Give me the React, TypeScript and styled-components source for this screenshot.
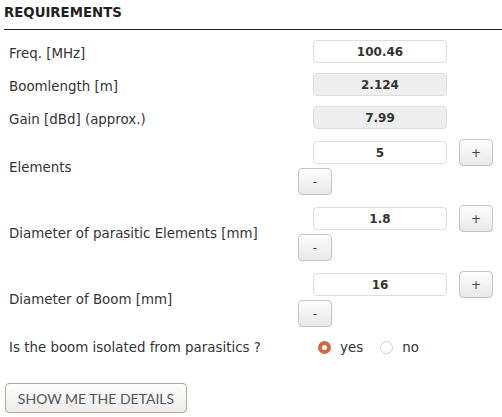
import React, { useState } from "react";
import styled, { createGlobalStyle } from "styled-components";

const GlobalStyle = createGlobalStyle`
  body {
    margin: 0;
    background: #fff;
    font-family: "DejaVu Sans", Verdana, sans-serif;
    font-size: 13.4px;
    color: #333;
  }
`;

const Page = styled.div`
  padding: 4px 0 0 4px;
`;

const Heading = styled.h3`
  margin: 0;
  padding: 1px 0 9px 0;
  font-size: 13.3px;
  font-weight: bold;
  color: #222;
  border-bottom: 1px solid #222;
`;

const Table = styled.div`
  margin-top: 5px;
  display: flex;
  flex-direction: column;
`;

const Row = styled.div<{ $gapTop?: number }>`
  display: grid;
  grid-template-columns: 294px 1fr;
  align-items: center;
  padding: 5px 0;
  margin-top: ${(p) => p.$gapTop ?? 0}px;
`;

const Label = styled.div<{ $low?: boolean }>`
  padding-left: 5px;
  padding-top: ${(p) => (p.$low ? "3px" : "0")};
`;

const Controls = styled.div`
  display: flex;
  flex-wrap: wrap;
  align-items: center;
  row-gap: 1px;
`;

const ValueBox = styled.input<{ $readOnly?: boolean }>`
  box-sizing: border-box;
  width: 134px;
  height: 23px;
  margin-left: 15px;
  border: 1px solid #ddd;
  border-radius: 4px;
  background: ${(p) => (p.$readOnly ? "#eee" : "#fff")};
  font-family: "DejaVu Sans", Verdana, sans-serif;
  font-size: 12px;
  font-weight: bold;
  color: #333;
  text-align: center;
  padding: 0;
  outline: none;
`;

const StepButton = styled.button<{ $wrap?: boolean }>`
  box-sizing: border-box;
  width: 34px;
  height: 27px;
  margin-left: ${(p) => (p.$wrap ? "0" : "12px")};
  border: 1px solid #c4c4c4;
  border-radius: 4px;
  background: linear-gradient(#fdfdfd, #e8e8e8);
  font-family: "DejaVu Sans", Verdana, sans-serif;
  font-size: 12px;
  color: #444;
  padding: 0;
  cursor: pointer;
`;

const Break = styled.div`
  flex-basis: 100%;
  height: 0;
`;

const RadioGroup = styled.div`
  display: flex;
  align-items: center;
  padding-left: 20px;
`;

const RadioLabel = styled.label`
  display: flex;
  align-items: center;
  margin-right: 17px;
  cursor: pointer;
`;

const RadioDot = styled.span<{ $on: boolean }>`
  box-sizing: border-box;
  display: inline-block;
  width: 13px;
  height: 13px;
  border-radius: 50%;
  margin-right: 9px;
  border: ${(p) => (p.$on ? "4px solid #cf6a44" : "1px solid #cfcfcf")};
  background: #fff;
`;

const DetailsButton = styled.button`
  margin: 23px 0 0 1px;
  box-sizing: border-box;
  width: 182px;
  height: 30px;
  border: 1px solid #bba293;
  border-radius: 4px;
  background: linear-gradient(#fdfdfd, #ececec);
  font-family: Lato, "Liberation Sans", sans-serif;
  font-size: 14px;
  color: #555;
  padding: 0;
  cursor: pointer;
`;

type Stepper = { label: string; value: string };

const steppers: Stepper[] = [
  { label: "Elements", value: "5" },
  { label: "Diameter of parasitic Elements [mm]", value: "1.8" },
  { label: "Diameter of Boom [mm]", value: "16" },
];

export default function App() {
  const [isolated, setIsolated] = useState(true);
  return (
    <Page>
      <GlobalStyle />
      <Heading>REQUIREMENTS</Heading>
      <Table>
        <Row>
          <Label $low>Freq. [MHz]</Label>
          <Controls>
            <ValueBox defaultValue="100.46" />
          </Controls>
        </Row>
        <Row>
          <Label $low>Boomlength [m]</Label>
          <Controls>
            <ValueBox $readOnly readOnly value="2.124" />
          </Controls>
        </Row>
        <Row>
          <Label $low>Gain [dBd] (approx.)</Label>
          <Controls>
            <ValueBox $readOnly readOnly value="7.99" />
          </Controls>
        </Row>
        {steppers.map((s) => (
          <Row key={s.label}>
            <Label>{s.label}</Label>
            <Controls>
              <ValueBox defaultValue={s.value} />
              <StepButton>+</StepButton>
              <Break />
              <StepButton $wrap>-</StepButton>
            </Controls>
          </Row>
        ))}
        <Row $gapTop={3}>
          <Label>Is the boom isolated from parasitics ?</Label>
          <RadioGroup>
            <RadioLabel onClick={() => setIsolated(true)}>
              <RadioDot $on={isolated} />
              yes
            </RadioLabel>
            <RadioLabel onClick={() => setIsolated(false)}>
              <RadioDot $on={!isolated} />
              no
            </RadioLabel>
          </RadioGroup>
        </Row>
      </Table>
      <DetailsButton>SHOW ME THE DETAILS</DetailsButton>
    </Page>
  );
}
